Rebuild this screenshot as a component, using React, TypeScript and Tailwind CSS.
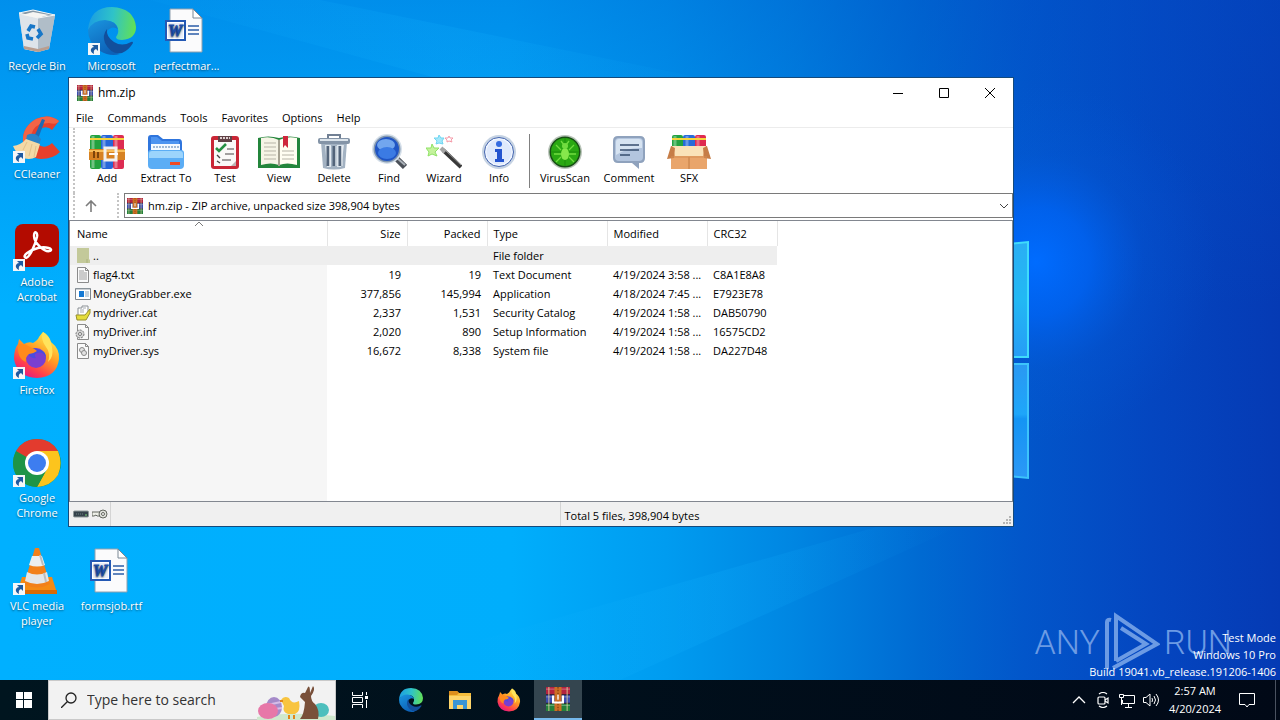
import type { ReactNode } from "react";

type Entry = {
  name: string;
  icon: ReactNode;
  size: string;
  packed: string;
  type: string;
  modified: string;
  crc: string;
};

function Wallpaper() {
  return (
    <svg
      className="absolute inset-0 h-full w-full"
      viewBox="0 0 1280 680"
      preserveAspectRatio="xMidYMin slice"
      aria-hidden="true"
    >
      <defs>
        <linearGradient id="wp-base" x1="0" x2="1" y1="0" y2="0">
          <stop offset="0" stopColor="#00b0ff" />
          <stop offset="0.4" stopColor="#00aefc" />
          <stop offset="0.52" stopColor="#009cf0" />
          <stop offset="0.62" stopColor="#0086e2" />
          <stop offset="0.72" stopColor="#006ad2" />
          <stop offset="0.8" stopColor="#0256ca" />
          <stop offset="0.9" stopColor="#0446c0" />
          <stop offset="1" stopColor="#053ab4" />
        </linearGradient>
        <linearGradient id="wp-top" x1="0" x2="0" y1="0" y2="1">
          <stop offset="0" stopColor="#0050c8" stopOpacity="0.34" />
          <stop offset="0.45" stopColor="#0058d0" stopOpacity="0" />
        </linearGradient>
        <radialGradient id="wp-glow" cx="1036" cy="262" r="180" gradientUnits="userSpaceOnUse">
          <stop offset="0" stopColor="#006cff" />
          <stop offset="0.3" stopColor="#0064f4" stopOpacity="0.8" />
          <stop offset="0.6" stopColor="#045ce0" stopOpacity="0.25" />
          <stop offset="1" stopColor="#0458d8" stopOpacity="0" />
        </radialGradient>
        <linearGradient id="wp-beam" x1="0" x2="1" y1="0" y2="0">
          <stop offset="0" stopColor="#14b4ff" stopOpacity="0.05" />
          <stop offset="0.5" stopColor="#14b4ff" stopOpacity="0.18" />
          <stop offset="1" stopColor="#14b4ff" stopOpacity="0" />
        </linearGradient>
        <linearGradient id="wp-pane" x1="0" x2="0" y1="0" y2="1">
          <stop offset="0" stopColor="#2aaef4" />
          <stop offset="0.5" stopColor="#22b8f4" />
          <stop offset="1" stopColor="#269cf6" />
        </linearGradient>
        <linearGradient id="wp-pane-low" x1="0" x2="0" y1="0" y2="1">
          <stop offset="0" stopColor="#2a98f2" />
          <stop offset="0.44" stopColor="#1ea6fa" />
          <stop offset="0.48" stopColor="#1494f4" />
          <stop offset="1" stopColor="#2c98f6" />
        </linearGradient>
      </defs>
      <rect width="1280" height="680" fill="url(#wp-base)" />
      <rect width="1280" height="680" fill="url(#wp-top)" />
      <path d="M150 0L480 90H760L320 0Z" fill="url(#wp-beam)" />
      <path d="M480 640L880 526H960L620 680H480Z" fill="url(#wp-beam)" />
      <circle cx="1036" cy="262" r="180" fill="url(#wp-glow)" />
      <path d="M1000 245L1028 242V357H1000Z" fill="url(#wp-pane)" stroke="#3fdcfb" strokeWidth="2" />
      <path d="M1000 364H1028V478L1000 475Z" fill="url(#wp-pane-low)" stroke="#3cc4fb" strokeWidth="2" />
    </svg>
  );
}

function ShortcutArrow() {
  return (
    <svg className="absolute bottom-0 left-0 size-3" viewBox="0 0 12 12">
      <path d="M0 0H12V12H0Z" fill="#f4f6f8" />
      <path d="M4 2H10V8L8 6Q5 7 6 11Q2 9 3 6Q4 4 6 4Z" fill="#1f5aa0" />
    </svg>
  );
}

function RecycleBinIcon() {
  return (
    <svg className="size-12" viewBox="0 0 48 48">
      <path d="M6 6L42 8L36 42L25 45L11 42Z" fill="#c9d3dc" />
      <path d="M6 6L25 11L25 45L11 42Z" fill="#dde4ea" />
      <path d="M25 11L42 8L36 42L25 45Z" fill="#b0bdc8" />
      <path d="M6 6L20 3L42 8L25 11Z" fill="#8698a6" stroke="#f4f8fa" />
      <path d="M9 8L20 5L36 8L25 11Z" fill="#f5f5f3" />
      <path d="M11 39L25 42L36 39L36 42L25 45L11 42Z" fill="#b99e8f" />
      <g fill="none" stroke="#1777c8" strokeWidth="3.6">
        <path d="M15 24L18 19L22 20" />
        <path d="M25 22L28 27L24 31" />
        <path d="M20 32L15 31L14 27" />
      </g>
    </svg>
  );
}

function EdgeIcon({ className }: { className: string }) {
  return (
    <svg className={className} viewBox="0 0 48 48">
      <defs>
        <linearGradient id="edge-top" x1="0" x2="1" y1="0.4" y2="0.5">
          <stop offset="0" stopColor="#1b9de2" />
          <stop offset="0.5" stopColor="#2fc3c8" />
          <stop offset="1" stopColor="#62e056" />
        </linearGradient>
        <linearGradient id="edge-left" x1="0" x2="0.5" y1="0" y2="1">
          <stop offset="0" stopColor="#1a96e0" />
          <stop offset="1" stopColor="#0d62b8" />
        </linearGradient>
      </defs>
      <path d="M0 23Q2 0 24 0Q46 1 48 20Q48 32 34 33Q28 33 28 30Q31 26 30 22Q28 13 17 14Q5 15 0 23Z" fill="url(#edge-top)" />
      <path d="M0 23Q5 13 17 13Q28 14 30 22Q24 18 19 24Q15 32 21 39Q25 45 32 47Q22 50 12 44Q0 36 0 23Z" fill="url(#edge-left)" />
      <path d="M19 22Q14 28 17 36Q23 48 34 46Q41 43 45 36Q45 34 43 35Q34 40 26 35Q18 30 19 22Z" fill="#124f9c" />
    </svg>
  );
}

function WordIcon() {
  return (
    <svg className="size-12" viewBox="0 0 48 48">
      <path d="M7 2H30L39 11V45H7Z" fill="#fbfbfc" stroke="#90a0ae" />
      <path d="M30 2V11H39Z" fill="#fff" stroke="#7b8895" />
      <path d="M25 19H36M25 23H36M25 27H36" stroke="#2c5ea8" strokeWidth="1.4" />
      <path d="M2 13H23V34H2Z" fill="#2459b4" />
      <path d="M4 15H21V32H4Z" fill="#fff" />
      <path d="M5 16H20V31H5Z" fill="#e9effa" />
      <text
        x="12"
        y="29"
        textAnchor="middle"
        fill="#1f4fa8"
        stroke="#1f4fa8"
        fontFamily="Liberation Serif, serif"
        fontSize="16"
        fontWeight="700"
        fontStyle="italic"
      >
        W
      </text>
    </svg>
  );
}

function CCleanerIcon() {
  return (
    <svg className="size-12" viewBox="0 0 48 48">
      <path d="M46 6Q36-2 23 4Q9 12 10 27Q13 43 28 44Q40 44 47 37L39 28Q31 35 25 29Q19 20 27 14Q34 10 39 15Z" fill="#e6402c" />
      <path d="M23 4Q9 12 10 27L18 26Q17 14 27 9L36 8Q44 10 46 6Q36-2 23 4Z" fill="#f26446" />
      <path d="M29 4L32 5L25 24L21 22Z" fill="#1d6ab4" />
      <path d="M14 20Q22 16 28 24L26 30L13 25Z" fill="#2a83c8" />
      <path d="M13 24L27 29L23 42Q16 46 8 42Q3 38 0 31Q8 30 13 24Z" fill="#f4d9a6" />
      <path d="M14 27L10 35M19 29L16 41M23 31L21 42" stroke="#e3c08a" />
    </svg>
  );
}

function AcrobatIcon() {
  return (
    <svg className="size-12" viewBox="0 0 48 48">
      <rect x="2" y="1" width="44" height="43" rx="8" fill="#b30b00" />
      <path
        d="M13 35C8 33 17 27 25 25C33 23 41 26 37 28C32 30 21 20 21 13C21 7 25 9 24 14C22 22 17 34 13 35Z"
        fill="none"
        stroke="#fff"
        strokeWidth="2.4"
      />
    </svg>
  );
}

function FirefoxIcon({ className }: { className: string }) {
  return (
    <svg className={className} viewBox="0 0 48 48">
      <defs>
        <linearGradient id="ff-body" x1="0.8" x2="0.25" y1="0.1" y2="1">
          <stop offset="0" stopColor="#ffe84a" />
          <stop offset="0.4" stopColor="#ff9a22" />
          <stop offset="0.75" stopColor="#ff3f4c" />
          <stop offset="1" stopColor="#e31587" />
        </linearGradient>
      </defs>
      <path d="M30 1Q36 4 38 11Q47 18 46 28Q44 46 24 47Q4 46 1 28Q1 18 5 13L6 8L11 13Q16 10 20 12Q25 9 26 6Q28 3 30 1Z" fill="url(#ff-body)" />
      <circle cx="23" cy="27" r="10" fill="#7a3fd0" />
      <path d="M14 21Q15 17 21 17Q25 18 27 19Q33 20 33 27Q30 20 24 22Q20 23 23 27Q17 28 14 21Z" fill="#4b4ce0" />
      <path d="M5 13Q11 12 17 16Q21 17 24 20Q20 23 16 23Q12 26 13 31Q4 28 5 13Z" fill="#ff8a1c" />
      <path d="M30 1Q27 8 33 16Q38 22 35 31Q41 26 39 16Q37 5 30 1Z" fill="#ffe35c" />
    </svg>
  );
}

function ChromeIcon() {
  return (
    <svg className="size-12" viewBox="0 0 48 48">
      <circle cx="24" cy="24" r="24" fill="#1e9447" />
      <path d="M24 24L3 12Q10 0 24 0Q38 0 45 12Z" fill="#e33b2e" />
      <path d="M24 12H45Q50 24 45 36Q38 47 24 48L34 30Z" fill="#fcc41d" />
      <path d="M24 48L34 30L24 24L12 30L3 12Q-3 24 3 36Q10 47 24 48Z" fill="#1e9447" />
      <circle cx="24" cy="24" r="12" fill="#fff" />
      <circle cx="24" cy="24" r="9" fill="#3d7df0" />
    </svg>
  );
}

function VlcIcon() {
  return (
    <svg className="size-12" viewBox="0 0 48 48">
      <path d="M9 30H39L44 46H4Z" fill="#f58a14" />
      <path d="M4 43H44V47H4Z" fill="#d86a06" />
      <path d="M22 1H26L37 37Q24 44 11 37Z" fill="#f2801a" />
      <path d="M19 9H29L32 18Q24 21 16 18Z" fill="#eceef0" />
      <path d="M14 25Q24 30 34 25L36 34Q24 40 12 34Z" fill="#e4e6e8" />
      <path d="M27 8L30 18M31 26L33 35" stroke="#bdbdbd" strokeWidth="2" />
    </svg>
  );
}

function RarIcon({ className }: { className: string }) {
  return (
    <svg className={className} viewBox="0 0 34 34">
      <path d="M0 0H34V11H0Z" fill="#b3233f" />
      <path d="M0 11H34V23H0Z" fill="#3a4cae" />
      <path d="M0 23H34V34H0Z" fill="#23813c" />
      <path d="M0 11H34M0 23H34" stroke="#2a1c2c" strokeWidth="1.4" />
      <path d="M0 3H34M0 14H34M0 26H34" stroke="#fff" strokeWidth="1.4" opacity="0.35" />
      <path d="M4 0V34M30 0V34" stroke="#e3d49b" strokeWidth="2" opacity="0.6" />
      <path d="M12 0H22V34H12Z" fill="#cd6f25" />
      <path d="M17 0V34" stroke="#8c4312" strokeWidth="2" strokeDasharray="2 2" />
      <path d="M10 12V22H24V12" fill="none" stroke="#fff" strokeWidth="3" />
      <path d="M17 11V18" stroke="#fff" strokeWidth="2" />
    </svg>
  );
}

function AddIcon() {
  return (
    <svg className="h-9 w-9" viewBox="0 0 36 36">
      <rect x="1" y="1" width="11" height="34" rx="2" fill="#23a23f" />
      <rect x="12" y="1" width="12" height="34" rx="2" fill="#2766d8" />
      <rect x="24" y="1" width="11" height="34" rx="2" fill="#dd2c52" />
      <path d="M4 2V34M15 2V34M27 2V34" stroke="#fff" strokeWidth="3" opacity="0.35" />
      <path d="M1 5H35" stroke="#f6d23c" strokeWidth="2" />
      <path d="M0 15H36V26H0Z" fill="#d78222" />
      <path d="M0 17H36" stroke="#f8bd58" strokeWidth="2" />
      <path d="M5 17V24M9 18V24" stroke="#7e4409" strokeWidth="2" />
      <path d="M16 14H27V26H16Z" fill="none" stroke="#f3f1ed" strokeWidth="3" />
      <path d="M20 20H29" stroke="#fff" strokeWidth="2" />
    </svg>
  );
}

function ExtractIcon() {
  return (
    <svg className="h-9 w-9" viewBox="0 0 36 36">
      <path d="M0 4Q0 1 3 1H10L15 5H31Q34 5 34 9V28H0Z" fill="#2f75dd" />
      <path d="M3 3H9L14 7H31V15H3Z" fill="#4d94f0" />
      <path d="M3 10H32V20H3Z" fill="#f4f9ff" />
      <path d="M5 13H31" stroke="#9fb9d7" strokeWidth="2" strokeDasharray="2 1" />
      <path d="M0 19Q0 16 3 16H33Q36 16 36 19V31Q36 35 32 35H4Q0 35 0 31Z" fill="#5badf5" />
      <path d="M1 20Q1 17 4 17H32Q35 17 35 20V24H1Z" fill="#9cd4fc" />
      <path d="M22 28H32V31H22Z" fill="#f04a24" />
    </svg>
  );
}

function TestIcon() {
  return (
    <svg className="h-9 w-9" viewBox="0 0 36 36">
      <rect x="4" y="2" width="28" height="33" rx="3" fill="#c92636" />
      <path d="M7 6H29V32H7Z" fill="#faf9f8" />
      <path d="M24 32L29 27V32Z" fill="#bcb3b3" />
      <path d="M11 2H25V8H11Z" fill="#614146" />
      <path d="M13 4H23" stroke="#dfcfcf" strokeWidth="2" strokeDasharray="2 1" />
      <path d="M9 14L12 17L19 10" fill="none" stroke="#279044" strokeWidth="2.6" />
      <path d="M20 15H27M18 20H27M15 26H24" stroke="#858181" strokeWidth="1.4" />
      <path d="M10 21L13 24M10 27L13 29" stroke="#444" strokeWidth="1.4" />
    </svg>
  );
}

function ViewIcon() {
  return (
    <svg className="h-9 w-11" viewBox="0 0 44 36">
      <path d="M1 4Q11 1 22 4Q33 1 43 4V34H1Z" fill="#23853b" />
      <path d="M4 4Q14 2 22 6V31Q14 28 4 31Z" fill="#f6f4e6" />
      <path d="M40 4Q30 2 22 6V31Q30 28 40 31Z" fill="#fffdf1" />
      <path d="M22 6V32" stroke="#a5a191" strokeWidth="2" />
      <path d="M7 9H19M7 13H19M7 17H19M7 21H19M7 25H19M25 17H37M25 21H37M25 25H37" stroke="#b7b4a7" />
      <path d="M26 2H31V14L28 11L26 14Z" fill="#ce263b" />
    </svg>
  );
}

function DeleteIcon() {
  return (
    <svg className="h-9 w-9" viewBox="0 0 36 36">
      <path d="M12 5V1H24V5" fill="none" stroke="#718094" strokeWidth="2" />
      <path d="M5 8H31L29 34Q18 37 7 34Z" fill="#a3b2c2" />
      <path d="M9 11L11 33H15V11ZM21 11V33H25L28 11Z" fill="#dde5ec" />
      <path d="M12 12V32M18 12V32M24 12V32" stroke="#53647a" strokeWidth="3" />
      <path d="M14 12V32M20 12V32M26 12V32" stroke="#f0f4f7" />
      <rect x="2" y="4" width="32" height="6" rx="2" fill="#8494a7" />
      <path d="M4 6H32" stroke="#dce4eb" strokeWidth="2" />
    </svg>
  );
}

function FindIcon() {
  return (
    <svg className="h-9 w-9" viewBox="0 0 36 36">
      <path d="M25 24L34 33" stroke="#4b5058" strokeWidth="6" />
      <path d="M26 24L34 31" stroke="#aab1b8" strokeWidth="2" />
      <circle cx="16" cy="15" r="15" fill="#d6e0ea" />
      <circle cx="16" cy="15" r="13.5" fill="#8297b0" />
      <circle cx="16" cy="15" r="12" fill="#2055c4" />
      <ellipse cx="15" cy="11" rx="9" ry="6" fill="#72a6ee" />
      <ellipse cx="16" cy="19" rx="9" ry="6" fill="#3b7be4" />
    </svg>
  );
}

function WizardIcon() {
  return (
    <svg className="h-9 w-9" viewBox="0 0 36 36">
      <path d="M17 16L35 33" stroke="#383838" strokeWidth="4" />
      <path d="M15 14L19 18" stroke="#a4a4a4" strokeWidth="4" />
      <path d="M20 17L35 31" stroke="#999" />
      <path d="M6 10L8 14L13 14L9 18L11 22L6 20L2 22L3 18L0 14L5 14Z" fill="#c4f29c" stroke="#8fe266" />
      <path d="M13 1L15 4L18 4L16 7L17 10L13 9L10 10L11 7L8 4L12 4Z" fill="#a4e8fa" stroke="#6fd6f2" />
      <path d="M23 2L24 4L27 4L25 6L26 8L23 7L21 8L21 6L19 4L22 4Z" fill="#fff" stroke="#f59aa8" />
    </svg>
  );
}

function InfoIcon() {
  return (
    <svg className="h-9 w-9" viewBox="0 0 36 36">
      <circle cx="18" cy="18" r="17" fill="#c6d3e3" />
      <circle cx="18" cy="18" r="14.5" fill="#f1f6ff" stroke="#4263ae" />
      <circle cx="18" cy="18" r="12.5" fill="#dfe9fc" />
      <circle cx="18" cy="10" r="3" fill="#356be0" />
      <path d="M14 15H21V25H23V28H14V25H16V18H14Z" fill="#2454cf" />
    </svg>
  );
}

function VirusIcon() {
  return (
    <svg className="h-9 w-9" viewBox="0 0 36 36">
      <circle cx="18" cy="18" r="17" fill="#bac4ba" />
      <circle cx="18" cy="18" r="15.5" fill="#174e14" />
      <circle cx="18" cy="18" r="14" fill="#2aa812" />
      <path d="M18 4V32M4 18H32" stroke="#1c8d0a" />
      <ellipse cx="18" cy="20" rx="4" ry="6" fill="#86e84c" />
      <circle cx="18" cy="12" r="3" fill="#72dc40" />
      <path d="M9 11L14 16M27 11L22 16M7 20H14M22 20H29M9 28L14 23M27 28L22 23M14 7L17 11M22 7L19 11" stroke="#72dc40" strokeWidth="1.3" />
    </svg>
  );
}

function CommentIcon() {
  return (
    <svg className="h-9 w-9" viewBox="0 0 36 36">
      <path d="M7 2H29Q34 2 34 7V24Q34 29 29 29H28V35L21 29H7Q2 29 2 24V7Q2 2 7 2Z" fill="#8fa2bd" />
      <path d="M8 4H28Q32 4 32 8V23Q32 27 28 27H8Q4 27 4 23V8Q4 4 8 4Z" fill="#b3c5de" />
      <path d="M5 8Q5 5 8 5H28Q31 5 31 8V14Q17 13 5 21Z" fill="#d6e3f1" />
      <path d="M9 11H28M9 16H28M9 21H19" stroke="#374d6d" strokeWidth="1.6" />
    </svg>
  );
}

function SfxIcon() {
  return (
    <svg className="h-9 w-11" viewBox="0 0 44 36">
      <rect x="5" y="1" width="11" height="16" rx="2" fill="#24a341" />
      <rect x="16" y="1" width="12" height="16" rx="2" fill="#286bd8" />
      <rect x="28" y="1" width="11" height="16" rx="2" fill="#df2a50" />
      <path d="M8 2V12M20 2V12M31 2V12" stroke="#fff" strokeWidth="3" opacity="0.3" />
      <path d="M5 5H39" stroke="#f6d53c" strokeWidth="2" />
      <path d="M4 12H40V35H4Z" fill="#e9a56b" />
      <path d="M5 12H39L36 22H8Z" fill="#fae2b8" />
      <path d="M4 12L0 25L7 24L8 14ZM40 12L44 25L37 24L36 14Z" fill="#c67d47" />
      <path d="M22 23V35" stroke="#c17a43" />
      <path d="M4 23H40" stroke="#d58e54" />
    </svg>
  );
}

function FolderRowIcon() {
  return (
    <svg className="h-4 w-4" viewBox="0 0 16 16">
      <path d="M2 0H14V11L15 12V15H2Z" fill="#c3c99a" />
      <path d="M12 11V15" stroke="#a9b17b" />
    </svg>
  );
}

function PageRowIcon({ children }: { children: ReactNode }) {
  return (
    <svg className="h-4 w-4" viewBox="0 0 16 16">
      <path d="M2.5 .5H10.5L13.5 3.5V15.5H2.5Z" fill="#fafafa" stroke="#8b8b8b" />
      <path d="M10.5 .5V3.5H13.5" fill="none" stroke="#8b8b8b" />
      {children}
    </svg>
  );
}

function ExeRowIcon() {
  return (
    <svg className="h-4 w-4" viewBox="0 0 16 16">
      <path d="M.5 2.5H15.5V13.5H.5Z" fill="#fff" stroke="#7d858c" />
      <path d="M1 3H15" stroke="#99a2a9" />
      <path d="M4 5H9V11H4Z" fill="#1479d4" />
      <path d="M10 6H14M10 8H14M10 10H14" stroke="#8ca6bb" />
    </svg>
  );
}

function CatRowIcon() {
  return (
    <svg className="h-4 w-4" viewBox="0 0 16 16">
      <path d="M3 3H7V1H13V9L10 12H3Z" fill="#fff" stroke="#898f94" />
      <path d="M5 5H9M8 3H11M5 7H9" stroke="#a5aab0" />
      <path d="M1 10H10L15 4V8L11 15H2Z" fill="#e4dc3b" stroke="#98912d" />
    </svg>
  );
}

const entries: Entry[] = [
  { name: "..", icon: <FolderRowIcon />, size: "", packed: "", type: "File folder", modified: "", crc: "" },
  {
    name: "flag4.txt",
    icon: (
      <PageRowIcon>
        <path d="M4 4H9M4 6H12M4 8H12M4 10H12M4 12H12" stroke="#9c9c9c" />
      </PageRowIcon>
    ),
    size: "19",
    packed: "19",
    type: "Text Document",
    modified: "4/19/2024 3:58 ...",
    crc: "C8A1E8A8"
  },
  {
    name: "MoneyGrabber.exe",
    icon: <ExeRowIcon />,
    size: "377,856",
    packed: "145,994",
    type: "Application",
    modified: "4/18/2024 7:45 ...",
    crc: "E7923E78"
  },
  {
    name: "mydriver.cat",
    icon: <CatRowIcon />,
    size: "2,337",
    packed: "1,531",
    type: "Security Catalog",
    modified: "4/19/2024 1:58 ...",
    crc: "DAB50790"
  },
  {
    name: "myDriver.inf",
    icon: (
      <PageRowIcon>
        <circle cx="5" cy="10" r="4" fill="#d5d5d5" stroke="#777" strokeDasharray="2 1" />
        <circle cx="5" cy="10" r="1.5" fill="#fff" stroke="#777" />
      </PageRowIcon>
    ),
    size: "2,020",
    packed: "890",
    type: "Setup Information",
    modified: "4/19/2024 1:58 ...",
    crc: "16575CD2"
  },
  {
    name: "myDriver.sys",
    icon: (
      <PageRowIcon>
        <circle cx="7" cy="7" r="2.5" fill="#e4e4e4" stroke="#888" />
        <circle cx="9" cy="10" r="2.5" fill="#e4e4e4" stroke="#888" />
      </PageRowIcon>
    ),
    size: "16,672",
    packed: "8,338",
    type: "System file",
    modified: "4/19/2024 1:58 ...",
    crc: "DA227D48"
  }
];

const shortcuts = [
  { label: "Recycle Bin", icon: <RecycleBinIcon />, linked: false, place: "col-start-1 row-start-1" },
  { label: "CCleaner", icon: <CCleanerIcon />, linked: true, place: "col-start-1 row-start-2" },
  { label: "Adobe Acrobat", icon: <AcrobatIcon />, linked: true, place: "col-start-1 row-start-3" },
  { label: "Firefox", icon: <FirefoxIcon className="size-12" />, linked: true, place: "col-start-1 row-start-4" },
  { label: "Google Chrome", icon: <ChromeIcon />, linked: true, place: "col-start-1 row-start-5" },
  { label: "VLC media player", icon: <VlcIcon />, linked: true, place: "col-start-1 row-start-6" },
  { label: "Microsoft Edge", icon: <EdgeIcon className="size-12" />, linked: true, place: "col-start-2 row-start-1" },
  { label: "formsjob.rtf", icon: <WordIcon />, linked: false, place: "col-start-2 row-start-6" },
  { label: "perfectmar...", icon: <WordIcon />, linked: false, place: "col-start-3 row-start-1" }
];

const menus = ["File", "Commands", "Tools", "Favorites", "Options", "Help"];

const tools = [
  { label: "Add", icon: <AddIcon />, width: "w-[54px]" },
  { label: "Extract To", icon: <ExtractIcon />, width: "w-16" },
  { label: "Test", icon: <TestIcon />, width: "w-[54px]" },
  { label: "View", icon: <ViewIcon />, width: "w-[54px]" },
  { label: "Delete", icon: <DeleteIcon />, width: "w-14" },
  { label: "Find", icon: <FindIcon />, width: "w-[54px]" },
  { label: "Wizard", icon: <WizardIcon />, width: "w-14" },
  { label: "Info", icon: <InfoIcon />, width: "w-[54px]" }
];

const extraTools = [
  { label: "VirusScan", icon: <VirusIcon />, width: "w-16" },
  { label: "Comment", icon: <CommentIcon />, width: "w-16" },
  { label: "SFX", icon: <SfxIcon />, width: "w-14" }
];

function ToolButton({ label, icon, width }: { label: string; icon: ReactNode; width: string }) {
  return (
    <button type="button" className={`flex flex-col items-center whitespace-nowrap ${width}`}>
      {icon}
      <span>{label}</span>
    </button>
  );
}

function ArchiveWindow() {
  return (
    <section className="absolute top-[77px] right-[266px] left-[68px] border border-[#144a7c] bg-white text-[11px] leading-4 text-black">
      <header className="flex h-[30px] items-center pl-2">
        <RarIcon className="size-4" />
        <h1 className="ml-[5px] flex-1 text-xs">hm.zip</h1>
        <button type="button" aria-label="Minimize" className="flex h-full w-[46px] items-center justify-center">
          <svg className="size-3" viewBox="0 0 12 12">
            <path d="M1 6.5H11" stroke="#000" />
          </svg>
        </button>
        <button type="button" aria-label="Maximize" className="flex h-full w-[46px] items-center justify-center">
          <svg className="size-3" viewBox="0 0 12 12">
            <path d="M1.5 1.5H10.5V10.5H1.5Z" fill="none" stroke="#000" />
          </svg>
        </button>
        <button type="button" aria-label="Close" className="flex h-full w-[46px] items-center justify-center">
          <svg className="size-3" viewBox="0 0 12 12">
            <path d="M1 1L11 11M11 1L1 11" stroke="#000" />
          </svg>
        </button>
      </header>

      <nav className="flex h-5 items-center gap-[14px] border-b border-[#ececec] pl-[7px]">
        {menus.map((menu) => (
          <button key={menu} type="button">
            {menu}
          </button>
        ))}
      </nav>

      <div className="mx-1 flex h-[65px] border-l-2 border-dotted border-[#c4c4c4] pt-[6px] pl-[5px]">
        {tools.map((tool) => (
          <ToolButton key={tool.label} {...tool} />
        ))}
        <div className="mx-[3px] h-[54px] w-px bg-[#808080]" />
        {extraTools.map((tool) => (
          <ToolButton key={tool.label} {...tool} />
        ))}
      </div>

      <div className="ml-1 flex h-[25px] border-l-2 border-dotted border-[#c4c4c4]">
        <button type="button" aria-label="Up" className="flex w-8 items-center justify-center">
          <svg className="size-3" viewBox="0 0 12 12">
            <path d="M6 12V2M1 6L6 1L11 6" fill="none" stroke="#7c7c7c" strokeWidth="1.6" />
          </svg>
        </button>
        <div className="ml-[10px] flex flex-1 border-l-2 border-dotted border-[#c4c4c4] pl-[5px]">
          <div className="flex flex-1 items-center border border-[#7a7a7a] pr-1 pl-[2px]">
            <RarIcon className="size-4" />
            <select aria-label="Path" className="ml-[5px] h-full flex-1 appearance-none bg-white outline-none">
              <option>hm.zip - ZIP archive, unpacked size 398,904 bytes</option>
            </select>
            <svg className="h-2 w-2" viewBox="0 0 8 8">
              <path d="M0 2L4 6L8 2" fill="none" stroke="#444" />
            </svg>
          </div>
        </div>
      </div>

      <div className="mt-[2px] flex min-h-[282px] flex-col border border-[#828790] bg-white">
        <table className="w-[707px] table-fixed border-collapse text-left">
          <thead>
            <tr className="h-[25px]">
              <th className="relative w-[257px] border-r border-[#e5e5e5] pl-[7px] font-normal">
                Name
                <svg className="absolute top-0 left-[124px] h-[6px] w-[10px]" viewBox="0 0 10 6">
                  <path d="M1 5L5 1L9 5" fill="none" stroke="#7a7a7a" />
                </svg>
              </th>
              <th className="w-20 border-r border-[#e5e5e5] pr-[6px] text-right font-normal">Size</th>
              <th className="w-20 border-r border-[#e5e5e5] pr-[6px] text-right font-normal">Packed</th>
              <th className="w-[120px] border-r border-[#e5e5e5] pl-[6px] font-normal">Type</th>
              <th className="w-[100px] border-r border-[#e5e5e5] pl-[6px] font-normal">Modified</th>
              <th className="w-[70px] border-r border-[#e5e5e5] pl-[6px] font-normal">CRC32</th>
            </tr>
          </thead>
          <tbody>
            {entries.map((entry) => (
              <tr key={entry.name} className="h-[19px] whitespace-nowrap first:bg-[#eeeeee]">
                <td className={entry.name === ".." ? "" : "bg-[#f6f6f6]"}>
                  <span className="flex items-center gap-[2px] pl-[5px]">
                    {entry.icon}
                    {entry.name}
                  </span>
                </td>
                <td className="pr-[6px] text-right">{entry.size}</td>
                <td className="pr-[6px] text-right">{entry.packed}</td>
                <td className="pl-[6px]">{entry.type}</td>
                <td className="pl-[6px]">{entry.modified}</td>
                <td className="pl-[6px]">{entry.crc}</td>
              </tr>
            ))}
          </tbody>
        </table>
        <div className="w-[257px] flex-1 bg-[#f6f6f6]" />
      </div>

      <footer className="flex h-6 bg-[#f0f0f0]">
        <div className="flex w-[42px] items-center gap-[3px] border-r border-[#d4d4d4] pl-1">
          <svg className="h-2 w-4" viewBox="0 0 16 8">
            <rect x=".5" y="1" width="15" height="6" rx="1" fill="#35424b" stroke="#8e9899" />
            <path d="M3 4H10" stroke="#718282" strokeDasharray="1 1" />
            <path d="M12 5H14" stroke="#7edb7a" />
          </svg>
          <svg className="h-3 w-4" viewBox="0 0 16 12">
            <path d="M0 4H8V8H5L4 7L2 8H0Z" fill="#eef0e8" stroke="#62665f" />
            <circle cx="11" cy="6" r="4" fill="#e0e2dc" stroke="#62665f" />
            <circle cx="11" cy="6" r="1.5" fill="#fff" stroke="#62665f" />
          </svg>
        </div>
        <div className="flex-1" />
        <div className="flex flex-1 items-center border-l border-[#d4d4d4] pl-1">
          <span className="flex-1 pt-[3px]">Total 5 files, 398,904 bytes</span>
          <svg className="size-3 self-end" viewBox="0 0 12 12">
            <path d="M8 2H10V4H8ZM5 5H7V7H5ZM8 5H10V7H8ZM2 8H4V10H2ZM5 8H7V10H5ZM8 8H10V10H8Z" fill="#b4b4b4" />
          </svg>
        </div>
      </footer>
    </section>
  );
}

function Watermark() {
  return (
    <div className="absolute right-12 bottom-2 flex items-center font-[Roboto,sans-serif] text-[34px] leading-none font-light text-[#6c9be4]">
      <span>ANY</span>
      <svg className="mx-1 h-[60px] w-14" viewBox="0 0 56 60" fill="none" stroke="#6c9be4" strokeWidth="4">
        <path d="M3 57V10Q3 7 7 8" />
        <path d="M12 49V4L53 32L9 56" />
        <path d="M17 16L42 32L12 49" />
      </svg>
      <span>RUN</span>
    </div>
  );
}

function EasterArt() {
  return (
    <svg className="h-[39px] w-[78px]" viewBox="0 0 78 39">
      <path d="M0 36Q30 30 78 35V39H0Z" fill="#cfe8cd" />
      <ellipse cx="17" cy="26" rx="8" ry="10" fill="#a58ac9" />
      <path d="M10 24L24 21M11 29L25 27" stroke="#d6bde8" strokeWidth="2" />
      <ellipse cx="11" cy="30" rx="10" ry="8" fill="#e777a8" />
      <ellipse cx="64" cy="29" rx="8" ry="7" fill="#4dbfbd" />
      <path d="M24 19Q27 14 32 17Q35 24 42 20Q44 31 38 33H31Q25 31 27 25Z" fill="#f8c43f" />
      <path d="M32 34V38M37 34V38M23 20L26 20" stroke="#e28618" strokeWidth="2" />
      <path d="M43 16Q44 11 48 12L51 6Q53 4 53 12L56 5Q59 8 54 15Q54 20 58 23Q63 29 61 38H43Q47 34 48 21Z" fill="#79503a" />
    </svg>
  );
}

function Taskbar() {
  return (
    <footer className="flex h-10 shrink-0 bg-linear-to-r from-[#00151f] to-[#010917] text-white">
      <button type="button" aria-label="Start" className="flex w-12 items-center justify-center">
        <svg className="size-4" viewBox="0 0 16 16">
          <path d="M0 0H7V7H0ZM8 0H16V7H8ZM0 8H7V16H0ZM8 8H16V16H8Z" fill="#fff" />
        </svg>
      </button>
      <label className="flex w-72 items-center border border-[#c9c9c9] bg-[#f2f2f2] pl-3 text-[#222]">
        <svg className="size-4" viewBox="0 0 16 16">
          <circle cx="10" cy="6" r="5" fill="none" stroke="#222" strokeWidth="1.3" />
          <path d="M6.5 9.5L0 16" stroke="#222" strokeWidth="1.3" />
        </svg>
        <input
          type="text"
          aria-label="Search"
          placeholder="Type here to search"
          className="ml-[10px] min-w-0 flex-1 bg-transparent text-sm outline-none placeholder:text-[#333]"
        />
        <EasterArt />
      </label>
      <button type="button" aria-label="Task View" className="flex w-12 items-center justify-center">
        <svg className="size-4" viewBox="0 0 16 16" fill="none" stroke="#fff">
          <path d="M.5 0V3.5H10.5V0M.5 16V12.5H10.5V16M.5 5.5H10.5V10.5H.5ZM14.5 0V3M14.5 8V16" />
          <path d="M13 4H16V7H13Z" fill="#fff" stroke="none" />
        </svg>
      </button>
      <div className="ml-[3px] flex gap-px">
        <button type="button" aria-label="Microsoft Edge" className="flex w-12 items-center justify-center">
          <EdgeIcon className="size-6" />
        </button>
        <button type="button" aria-label="File Explorer" className="flex w-12 items-center justify-center">
          <svg className="h-6 w-6" viewBox="0 0 24 24">
            <path d="M1 3H9L11 5H23V21H1Z" fill="#f6bd3c" />
            <path d="M1 3H9L11 5L9 7H1Z" fill="#dd8f1d" />
            <path d="M1 8H23V21H1Z" fill="#fed56b" />
            <path d="M5 12H19V21H15V17H9V21H5Z" fill="#3b95d4" />
          </svg>
        </button>
        <button type="button" aria-label="Firefox" className="flex w-12 items-center justify-center">
          <FirefoxIcon className="size-6" />
        </button>
        <button type="button" aria-label="WinRAR" className="flex w-12 items-center justify-center border-b-2 border-[#76b9ed] bg-[#34454f]">
          <RarIcon className="size-6" />
        </button>
      </div>

      <div className="ml-auto flex items-center pr-1">
        <button type="button" aria-label="Show hidden icons" className="flex w-6 justify-center">
          <svg className="size-4" viewBox="0 0 16 16">
            <path d="M2 11L8 5L14 11" fill="none" stroke="#fff" strokeWidth="1.3" />
          </svg>
        </button>
        <button type="button" aria-label="Meet Now" className="flex w-6 justify-center">
          <svg className="size-4" viewBox="0 0 16 16" fill="none" stroke="#fff" strokeWidth="1.2">
            <rect x="3" y="5" width="7" height="7" rx="1" />
            <path d="M10 8L13 6V11L10 9M4 2Q8-1 12 2M4 14Q8 17 12 14" />
          </svg>
        </button>
        <button type="button" aria-label="Network" className="flex w-6 justify-center">
          <svg className="size-4" viewBox="0 0 16 16" fill="none" stroke="#fff">
            <path d="M5 3.5H15.5V11.5H3.5V8M9.5 12V15M6 15.5H13" />
            <path d="M.5 2.5H4.5V5.5H.5ZM2.5 6V13" />
          </svg>
        </button>
        <button type="button" aria-label="Volume" className="flex w-6 justify-center">
          <svg className="size-4" viewBox="0 0 16 16" fill="none" stroke="#fff">
            <path d="M.5 5.5H3L7 2V14L3 10.5H.5ZM9 6Q10 8 9 10M11 4Q14 8 11 12M13 2Q18 8 13 14" />
          </svg>
        </button>
        <time className="w-16 text-center text-[11px] leading-[18px]">
          2:57 AM
          <br />
          4/20/2024
        </time>
        <button type="button" aria-label="Notifications" className="flex w-10 justify-center">
          <svg className="size-4" viewBox="0 0 16 16">
            <path d="M.5 1.5H15.5V12.5H10L8 15L6 12.5H.5Z" fill="none" stroke="#fff" />
          </svg>
        </button>
        <div className="ml-2 h-10 w-px bg-[#4a5260]" />
      </div>
    </footer>
  );
}

export default function App() {
  return (
    <main className="flex h-screen min-h-[680px] flex-col overflow-hidden font-['Open_Sans','Noto_Sans',sans-serif]">
      <div className="relative flex-1 overflow-hidden bg-[#0088e6]">
        <Wallpaper />
        <div className="relative grid w-max auto-rows-[108px] grid-cols-[74px_75px_75px] pt-[7px]">
          {shortcuts.map((item) => (
            <button
              key={item.label}
              type="button"
              className={`flex flex-col items-center text-[11px] leading-[15px] text-white text-shadow-[0_1px_2px_rgb(0_0_0/0.5)] ${item.place}`}
            >
              <span className="relative mb-[3px] block">
                {item.icon}
                {item.linked ? <ShortcutArrow /> : null}
              </span>
              <span className="w-[66px]">{item.label}</span>
            </button>
          ))}
        </div>
        <ArchiveWindow />
        <Watermark />
        <p className="absolute right-1 bottom-0 text-right text-[11px] leading-[17px] text-white">
          Test Mode
          <br />
          Windows 10 Pro
          <br />
          Build 19041.vb_release.191206-1406
        </p>
      </div>
      <Taskbar />
    </main>
  );
}
